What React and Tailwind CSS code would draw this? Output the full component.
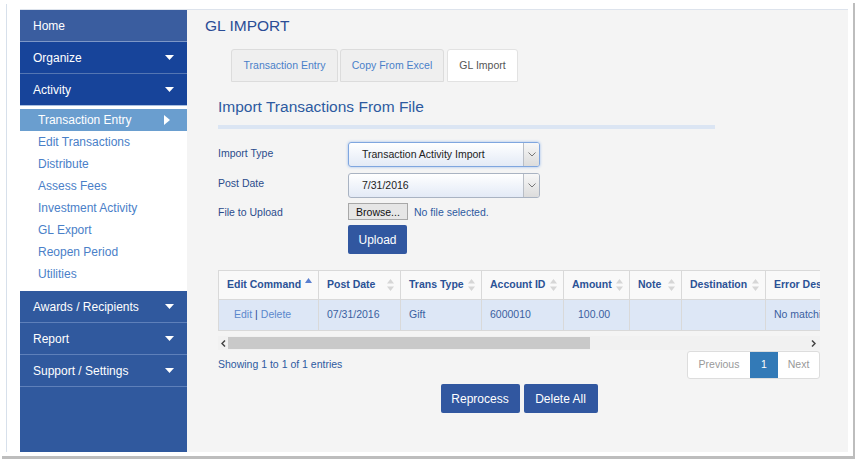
import React from 'react';

const font = "font-['Liberation_Sans',Arial,sans-serif]";

const topMenu = [
  { label: 'Home', caret: false, bg: 'bg-[#3a5d9f]', border: 'border-[#7d97c7]' },
  { label: 'Organize', caret: true, bg: 'bg-[#17449a]', border: 'border-[#5476b3]' },
  { label: 'Activity', caret: true, bg: 'bg-[#17449a]', border: 'border-[#a9bfe0]' },
];

const subMenu = [
  'Transaction Entry',
  'Edit Transactions',
  'Distribute',
  'Assess Fees',
  'Investment Activity',
  'GL Export',
  'Reopen Period',
  'Utilities',
];

const bottomMenu = ['Awards / Recipients', 'Report', 'Support / Settings'];

const columns = [
  { label: 'Edit Command', w: 'w-[100px]', sort: 'asc' },
  { label: 'Post Date', w: 'w-[82px]', sort: 'both' },
  { label: 'Trans Type', w: 'w-[81px]', sort: 'both' },
  { label: 'Account ID', w: 'w-[82px]', sort: 'both' },
  { label: 'Amount', w: 'w-[66px]', sort: 'both' },
  { label: 'Note', w: 'w-[52px]', sort: 'both' },
  { label: 'Destination', w: 'w-[84px]', sort: 'both' },
  { label: 'Error Description', w: 'w-[140px]', sort: 'both' },
];

function Caret() {
  return (
    <svg width="9" height="5" viewBox="0 0 9 5">
      <path d="M0 0h9L4.5 5z" fill="#fff" />
    </svg>
  );
}

function SortIcon({ type }) {
  if (type === 'asc') {
    return (
      <svg width="7" height="12" viewBox="0 0 7 12" className="mb-[3px]">
        <path d="M3.5 0L7 5H0z" fill="#5a7fcf" />
      </svg>
    );
  }
  return (
    <svg width="7" height="12" viewBox="0 0 7 12">
      <path d="M3.5 0L7 4.5H0z M0 7.5h7L3.5 12z" fill="#d6d6d6" />
    </svg>
  );
}

function Chevron() {
  return (
    <svg width="8" height="5" viewBox="0 0 8 5">
      <path d="M0.5 0.5L4 4L7.5 0.5" fill="none" stroke="#777" strokeWidth="1" />
    </svg>
  );
}

function ScrollArrow({ dir }) {
  return (
    <svg width="5" height="7" viewBox="0 0 5 7">
      <path
        d={dir === 'left' ? 'M4 0.5L1 3.5L4 6.5' : 'M1 0.5L4 3.5L1 6.5'}
        fill="none"
        stroke="#444"
        strokeWidth="1.5"
      />
    </svg>
  );
}

function Sidebar() {
  return (
    <div className="w-[167px] flex flex-col bg-[#30599e] text-[12px] text-white">
      {topMenu.map((m) => (
        <div
          key={m.label}
          className={`h-[32px] flex items-center justify-between pl-[13px] pr-[13px] border-b ${m.bg} ${m.border}`}
        >
          <span>{m.label}</span>
          {m.caret && <Caret />}
        </div>
      ))}
      <div className="bg-white pt-[3px] pb-[6px]">
        {subMenu.map((s, i) => (
          <div
            key={s}
            className={`h-[22px] flex items-center justify-between pl-[18px] pr-[17px] ${
              i === 0 ? 'bg-[#6a9ecf] text-white' : 'text-[#4a80c8]'
            }`}
          >
            <span>{s}</span>
            {i === 0 && (
              <svg width="6" height="10" viewBox="0 0 6 10">
                <path d="M0 0L6 5L0 10z" fill="#fff" />
              </svg>
            )}
          </div>
        ))}
      </div>
      {bottomMenu.map((m) => (
        <div
          key={m}
          className="h-[32px] flex items-center justify-between pl-[13px] pr-[13px] border-b border-[#5e80ba]"
        >
          <span>{m}</span>
          <Caret />
        </div>
      ))}
    </div>
  );
}

function SelectBox({ value, focused }) {
  return (
    <div
      className={`w-[192px] h-[25px] flex items-stretch rounded-[3px] border bg-gradient-to-b from-white to-[#e3eaf6] ${
        focused ? 'border-[#7fa6df] shadow-[0_0_3px_#9cbcec]' : 'border-[#a9b3c2]'
      }`}
    >
      <div className="flex-1 flex items-center pl-[13px] text-[10.5px] text-[#222]">{value}</div>
      <div className="w-[16px] flex items-center justify-center border-l border-[#b9bec6] bg-gradient-to-b from-[#f7f7f7] to-[#dcdcdc] rounded-r-[2px]">
        <Chevron />
      </div>
    </div>
  );
}

function Main() {
  return (
    <div className="flex-1 bg-[#f4f4f4] pl-[18px] pt-[7px]">
      <div className="text-[15.5px] leading-[18px] text-[#2a4d96]">GL IMPORT</div>

      <div className="ml-[26px] mt-[14px] flex gap-[2px] text-[10.5px]">
        <div className="w-[107px] h-[33px] flex items-center justify-center bg-[#efefef] border border-[#dcdcdc] rounded-t-[3px] text-[#4a7fc9]">
          Transaction Entry
        </div>
        <div className="w-[104px] h-[33px] flex items-center justify-center bg-[#efefef] border border-[#dcdcdc] rounded-t-[3px] text-[#4a7fc9]">
          Copy From Excel
        </div>
        <div className="ml-[1px] w-[71px] h-[33px] flex items-center justify-center bg-white border border-[#e2e2e2] rounded-t-[3px] text-[#555]">
          GL Import
        </div>
      </div>

      <div className="ml-[13px] w-[602px]">
        <div className="mt-[16px] text-[15.5px] leading-[18px] text-[#2d5aa0]">Import Transactions From File</div>
        <div className="mt-[9px] h-[4px] w-[497px] bg-[#dbe5f3]" />

        <div className="mt-[13px] flex items-start">
          <div className="w-[130px] pt-[4px] text-[10.5px] leading-[14px] text-[#2b4c8c]">Import Type</div>
          <SelectBox value="Transaction Activity Import" focused />
        </div>
        <div className="mt-[6px] flex items-start">
          <div className="w-[130px] pt-[3px] text-[10.5px] leading-[14px] text-[#2b4c8c]">Post Date</div>
          <SelectBox value="7/31/2016" />
        </div>
        <div className="mt-[5px] flex items-center">
          <div className="w-[130px] pt-[1px] text-[10.5px] leading-[14px] text-[#2b4c8c]">File to Upload</div>
          <div className="w-[60px] h-[17px] flex items-center justify-center bg-[#e6e6e6] border border-[#a8a8a8] text-[10.5px] leading-[14px] text-[#111]">
            Browse...
          </div>
          <div className="ml-[6px] text-[10.5px] leading-[14px] text-[#2d5aa0]">No file selected.</div>
        </div>
        <div className="mt-[5px] ml-[130px] w-[59px] h-[29px] flex items-center justify-center bg-[#3157a0] rounded-[2px] text-[12px] text-white">
          Upload
        </div>

        <div className="mt-[16px] w-[602px] overflow-hidden">
          <div className="w-max">
            <div className="flex bg-[#f9f9f9] border-t border-l border-[#d9d9d9]">
              {columns.map((c) => (
                <div
                  key={c.label}
                  className={`${c.w} h-[29px] shrink-0 flex items-center justify-between pl-[8px] pr-[6px] border-r border-b border-[#d9d9d9] text-[10.5px] font-bold text-[#2b5296] whitespace-nowrap`}
                >
                  <span>{c.label}</span>
                  <SortIcon type={c.sort} />
                </div>
              ))}
            </div>
            <div className="flex bg-[#dde7f6] border-l border-[#d9d9d9] text-[10.5px] text-[#3a5fa0]">
              <div className="w-[100px] h-[31px] shrink-0 flex items-center pl-[15px] border-r border-b border-[#d9d9d9]">
                <span className="text-[#5b87cc]">Edit</span>
                <span className="mx-[3px] text-[#2b4c8c]">|</span>
                <span className="text-[#5b87cc]">Delete</span>
              </div>
              <div className="w-[82px] h-[31px] shrink-0 flex items-center pl-[8px] border-r border-b border-[#d9d9d9]">07/31/2016</div>
              <div className="w-[81px] h-[31px] shrink-0 flex items-center pl-[8px] border-r border-b border-[#d9d9d9]">Gift</div>
              <div className="w-[82px] h-[31px] shrink-0 flex items-center pl-[8px] border-r border-b border-[#d9d9d9]">6000010</div>
              <div className="w-[66px] h-[31px] shrink-0 flex items-center pl-[14px] border-r border-b border-[#d9d9d9]">100.00</div>
              <div className="w-[52px] h-[31px] shrink-0 border-r border-b border-[#d9d9d9]" />
              <div className="w-[84px] h-[31px] shrink-0 border-r border-b border-[#d9d9d9]" />
              <div className="w-[140px] h-[31px] shrink-0 flex items-center pl-[8px] border-r border-b border-[#d9d9d9] whitespace-nowrap">
                No matching account
              </div>
            </div>
          </div>
        </div>

        <div className="mt-[5px] h-[14px] flex items-center bg-[#f1f1f1]">
          <div className="w-[10px] flex justify-center">
            <ScrollArrow dir="left" />
          </div>
          <div className="w-[362px] h-[12px] bg-[#c9c9c9]" />
          <div className="flex-1" />
          <div className="w-[14px] flex justify-center">
            <ScrollArrow dir="right" />
          </div>
        </div>

        <div className="mt-[1px] flex items-center justify-between">
          <div className="text-[10.5px] text-[#2d5aa0]">Showing 1 to 1 of 1 entries</div>
          <div className="flex h-[28px] text-[10.5px] border border-[#dddddd] rounded-[3px] overflow-hidden bg-white">
            <div className="w-[62px] flex items-center justify-center text-[#999]">Previous</div>
            <div className="w-[28px] flex items-center justify-center bg-[#337ab7] text-white">1</div>
            <div className="w-[41px] flex items-center justify-center text-[#999]">Next</div>
          </div>
        </div>

        <div className="mt-[5px] flex justify-center gap-[4px] text-[12px] text-white">
          <div className="w-[79px] h-[29px] flex items-center justify-center bg-[#3157a0] rounded-[2px]">Reprocess</div>
          <div className="w-[74px] h-[29px] flex items-center justify-center bg-[#3157a0] rounded-[2px]">Delete All</div>
        </div>
      </div>
    </div>
  );
}

export default function App() {
  return (
    <div className={`w-[855px] h-[459px] bg-white ${font}`}>
      <div className="w-[853px] h-[456px] bg-white shadow-[2px_3px_0_#bdbdbd] flex">
        <div className="w-[20px] pl-[6px] pt-[4px] pb-[4px]">
          <div className="w-px h-full bg-[#d7e0eb]" />
        </div>
        <div className="flex-1 pt-[9px] pr-[5px]">
          <div className="h-[443px] flex border-t border-[#dde3ec]">
            <Sidebar />
            <Main />
          </div>
        </div>
      </div>
    </div>
  );
}
